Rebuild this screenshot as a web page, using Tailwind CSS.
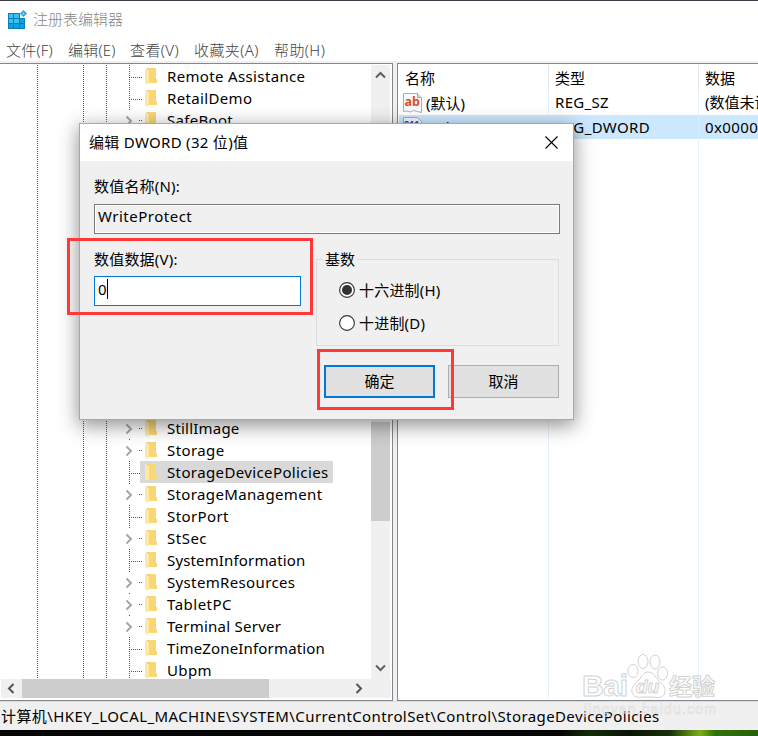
<!DOCTYPE html>
<html lang="zh-CN">
<head>
<meta charset="utf-8">
<title>注册表编辑器</title>
<script src="https://cdn.jsdelivr.net/npm/@tailwindcss/browser@4"></script>
</head>
<body class="relative flex h-[736px] w-[758px] flex-col overflow-hidden bg-white font-['Noto_Sans','Noto_Sans_CJK_SC',sans-serif] text-[15px] leading-[22px] text-black">
<div class="h-px shrink-0 bg-[#3e3944]"></div>

<header class="flex h-[37px] shrink-0 items-center pl-2 text-[#888]">
  <svg class="mr-[5px] h-5 w-5" viewBox="0 0 20 20">
    <path fill="#0b7dba" d="M0 3h12v5h5v11H0z"/>
    <path fill="#35c3f3" d="M1 4h4v4H1zM6 4h5v4H6zM1 9h4v4H1zM6 9h5v4H6z"/>
    <path fill="#12a0dc" d="M12 9h4v4h-4zM1 14h4v4H1zM6 14h5v4H6zM12 14h4v4h-4z"/>
    <path fill="#2b9fd4" d="M15.500 0l3.500 3.500-3.500 3.500L12 3.500z"/><path fill="#7bd5f3" d="M15.500 2l1.500 1.500-1.500 1.500L14 3.500z"/>
  </svg>
  <span class="-mt-px font-light">注册表编辑器</span>
</header>

<nav class="flex h-[23px] shrink-0 items-center pl-[6px] font-light text-[#444]">
  <span class="w-[62px] tracking-[0.2px]">文件(F)</span><span class="w-[62px] tracking-[0.2px]">编辑(E)</span><span class="w-[64px] tracking-[0.4px]">查看(V)</span><span class="w-[80px] tracking-[0.4px]">收藏夹(A)</span><span class="tracking-[0.4px]">帮助(H)</span>
</nav>
<div class="h-[2px] shrink-0 bg-[#f0f0f0]"></div>

<main class="flex h-[638px] shrink-0 bg-[#f0f0f0]">
  <section class="flex w-[393px] shrink-0 flex-col border-y border-r border-[#828790] bg-white pt-px pr-px pb-[2px]">
    <div class="flex h-[614px]">
      <div class="relative w-[371px] shrink-0 overflow-hidden">
        <div class="absolute top-0 left-[37px] h-full w-px bg-[repeating-linear-gradient(180deg,#555_0_1px,transparent_1px_2px)]"></div>
        <div class="absolute top-0 left-[83px] h-full w-px bg-[repeating-linear-gradient(180deg,#555_0_1px,transparent_1px_2px)]"></div>
        <div class="absolute top-0 left-[106px] h-full w-px bg-[repeating-linear-gradient(180deg,#555_0_1px,transparent_1px_2px)]"></div>
        <div id="tree"></div>
      </div>
      <div class="flex w-[19px] flex-col items-center bg-[#f0f0f0]">
        <svg class="mt-[6px] h-2 w-[11px]" viewBox="0 0 11 8" fill="none" stroke="#606060" stroke-width="2"><path d="M1 6.500L5.500 2 10 6.500"/></svg>
        <div class="mt-[343px] h-[99px] w-full bg-[#cdcdcd]"></div>
        <svg class="mt-[143px] h-2 w-[11px]" viewBox="0 0 11 8" fill="none" stroke="#606060" stroke-width="2"><path d="M1 1.500L5.500 6 10 1.500"/></svg>
      </div>
    </div>
    <div class="ml-px flex h-[19px] items-center bg-[#f0f0f0]">
      <svg class="ml-[6px] h-[11px] w-2" viewBox="0 0 8 11" fill="none" stroke="#555" stroke-width="2"><path d="M6.500 1L2 5.500 6.500 10"/></svg>
      <div class="ml-[7px] h-full w-[247px] bg-[#cdcdcd]"></div>
      <svg class="ml-[86px] h-[11px] w-2" viewBox="0 0 8 11" fill="none" stroke="#555" stroke-width="2"><path d="M1.500 1L6 5.500 1.500 10"/></svg>
    </div>
  </section>

  <section class="ml-1 flex min-w-0 flex-1 flex-col overflow-hidden border-y border-l border-[#828790] bg-white pt-px pb-px pl-px">
    <div class="grid h-[26px] shrink-0 grid-cols-[150px_150px_1fr] items-stretch">
      <div class="border-r border-[#e5e5e5] pt-[2px] pl-[6px]">名称</div>
      <div class="border-r border-[#e5e5e5] pt-[2px] pl-[6px]">类型</div>
      <div class="pt-[2px] pl-[6px]">数据</div>
    </div>
    <div class="grid h-6 shrink-0 grid-cols-[150px_150px_60px] whitespace-nowrap">
      <div class="flex items-center border-r border-[#e5f3ff] pl-1">
        <svg class="mr-[3px] h-5 w-5" viewBox="0 0 20 20"><path d="M.5 .5h14l4 4v15l-4-1-4-1-3 1.500-4-1-3 .5z" fill="#f9fafb" stroke="#a8adb0"/><path d="M14.500 .5v4h4" fill="#ddd" stroke="#aaa"/><text x="1.500" y="13" font-size="12.500" font-weight="700" fill="#d94f2b" font-family="Noto Sans">ab</text></svg>
        <span>(默认)</span>
      </div>
      <div class="border-r border-[#e5f3ff] pl-[6px] tracking-[0.3px]">REG_SZ</div>
      <div class="pl-[6px]">(数值未设置)</div>
    </div>
    <div class="grid h-6 shrink-0 grid-cols-[150px_150px_60px] bg-[#cce8ff] whitespace-nowrap">
      <div class="flex items-center pl-1">
        <svg class="mr-[2px] h-5 w-5" viewBox="0 0 20 20"><path d="M.5 .5h14l4 4v15H.5z" fill="#f4f7fb" stroke="#a8adb0"/><text x="1" y="10" font-size="9" font-weight="700" fill="#2545c8" font-family="Noto Sans">011</text></svg>
        <span class="tracking-[0.4px]">WriteProtect</span>
      </div>
      <div class="border-r border-[#d8edff] pt-px pl-[6px] tracking-[0.35px]">REG_DWORD</div>
      <div class="pt-px pl-[6px] tracking-[0.4px]">0x00000000</div>
    </div>
    <div class="grid flex-1 grid-cols-[150px_150px_1fr]">
      <div class="border-r border-[#e5f3ff]"></div><div class="border-r border-[#e5f3ff]"></div><div></div>
    </div>
  </section>
</main>

<footer class="flex h-[29px] shrink-0 items-center border-t border-[#dcdcdc] bg-[#f0f0f0] pl-px whitespace-nowrap"><span class="tracking-[0.41px]">计算机\HKEY_LOCAL_MACHINE\SYSTEM\CurrentControlSet\Control\StorageDevicePolicies</span></footer>
<div class="flex-1 bg-[linear-gradient(90deg,#050505_0_560px,#142b08_590px,#0a1405_630px,#18300b_670px,#7cae1a_700px,#32720c_715px,#285f0b_758px)]"></div>

<svg class="absolute top-[650px] left-[580px] h-[70px] w-[140px]" viewBox="0 0 140 70" fill="#fff" fill-opacity=".6" stroke="#d2d2d2">
  <text x="2" y="46" font-family="Liberation Sans" font-weight="700" font-size="30" textLength="46">Bai</text>
  <ellipse cx="53" cy="21" rx="5" ry="6.500"/><ellipse cx="63" cy="11.500" rx="5" ry="7"/><ellipse cx="75" cy="12" rx="5" ry="7"/><ellipse cx="82.500" cy="23.500" rx="5" ry="6.500"/>
  <path d="M68 22c5 0 7 4 10 8 4 4 8 7 7 12-1 6-7 6-12 5h-10c-5 1-10 0-11-5-1-5 3-8 7-12 3-4 4-8 9-8z"/>
  <text x="56" y="43" font-family="Liberation Sans" font-style="italic" font-weight="700" font-size="19" textLength="23">du</text>
  <text x="89" y="45" font-family="Noto Sans CJK SC" font-weight="700" font-size="23" textLength="46">经验</text>
  <text x="4" y="64" font-family="Liberation Sans" font-size="14" stroke-width=".6" stroke-opacity=".7" fill-opacity=".35" textLength="132">jingyan.baidu.com</text>
</svg>

<div class="absolute top-[123px] left-[79px] flex h-[297px] w-[495px] flex-col border border-[#78b4e8] bg-[#f0f0f0] shadow-[0_5px_18px_1px_rgba(0,0,0,0.42)]">
  <div class="flex h-[37px] shrink-0 items-center justify-between bg-white pr-[15px] pl-[9px]">
    <span class="-mt-[2px] tracking-[0.3px]">编辑 DWORD (32 位)值</span>
    <svg class="h-[13px] w-[13px]" viewBox="0 0 13 13" stroke="#000" stroke-width="1.100"><path d="M.5 .5l12 12M12.500 .5l-12 12"/></svg>
  </div>
  <div class="flex flex-col px-[14px] pt-[14px]">
    <span class="h-[22px] tracking-[0.2px]">数值名称(N):</span>
    <div class="mt-[7px] h-[30px] w-[466px] border border-[#7a7a7a] px-[3px] tracking-[0.5px] shadow-[inset_0_0_0_1px_#fff]">WriteProtect</div>
    <div class="flex">
      <div class="w-[222px] pt-[14px]">
        <div class="h-[22px] tracking-[0.2px]">数值数据(V):</div>
        <div class="mt-[6px] flex h-[30px] w-[207px] border border-[#0078d7] bg-white pt-px pl-[3px]"><span>0</span><span class="mt-px h-5 w-px bg-black"></span></div>
      </div>
      <div class="mt-[25px] h-[87px] w-[243px] border border-[#dcdcdc]">
        <div class="-mt-3 ml-[6px] h-[22px] w-[34px] bg-[#f0f0f0] pl-[2px]">基数</div>
        <div class="mt-[9px] ml-[22px] flex h-[22px] items-center gap-1"><svg class="h-4 w-4" viewBox="0 0 16 16"><circle cx="8" cy="8" r="7.400" fill="#fff" stroke="#333" stroke-width="1.100"/><circle cx="8" cy="8" r="5" fill="#333"/></svg><span class="tracking-[0.2px]">十六进制(H)</span></div>
        <div class="mt-[11px] ml-[22px] flex h-[22px] items-center gap-1"><svg class="h-4 w-4" viewBox="0 0 16 16"><circle cx="8" cy="8" r="7.400" fill="#fff" stroke="#333" stroke-width="1.100"/></svg><span class="tracking-[0.2px]">十进制(D)</span></div>
      </div>
    </div>
    <div class="mt-[19px] ml-[230px] flex gap-[13px]">
      <div class="flex h-[33px] w-[111px] items-center justify-center border-2 border-[#0078d7] bg-[#e1e1e1] pb-[2px]">确定</div>
      <div class="flex h-[33px] w-[111px] items-center justify-center border border-[#adadad] bg-[#e1e1e1] pb-[2px]">取消</div>
    </div>
  </div>
</div>

<div class="absolute top-[238px] left-[67px] h-[77px] w-[246px] border-3 border-[#ff3838]"></div>
<div class="absolute top-[349px] left-[317px] h-[61px] w-[137px] border-3 border-[#ff3838]"></div>

<script>
// [name, expandable, letter spacing in px, selected]
const before = [['Remote Assistance', 0, .35], ['RetailDemo', 0, .35], ['SafeBoot', 1, .3]];
const after = [['StillImage', 1, .2], ['Storage', 1, .4], ['StorageDevicePolicies', 0, .38, 1], ['StorageManagement', 1, .36], ['StorPort', 0, .4], ['StSec', 1, .5], ['SystemInformation', 0, .15], ['SystemResources', 1, .35], ['TabletPC', 1, .5], ['Terminal Server', 1, .25], ['TimeZoneInformation', 0, .16], ['Ubpm', 0, .4]];
const folder = '<svg class="mr-[7px] h-[17px] w-3 shrink-0" viewBox="0 0 12 17"><path d="M2 0h9v11h1v4H2z" fill="#f2cb63"/><path d="M4 0h7v11h1v4H4z" fill="#f8d775"/><path d="M0 0l4 2v12l-1 3-3-2z" fill="#ffe9a2"/></svg>';
const branch = open => open
  ? '<svg class="h-[22px] w-5 shrink-0" viewBox="0 0 20 22"><path d="M1.500 7.500l4.500 4.500L1.500 16.500" fill="none" stroke="#a6a6a6" stroke-width="2"/><path d="M14 11h1v1h-1zM16 11h1v1h-1zM4 0h1v1H4z" fill="#555"/></svg>'
  : '<svg class="h-[22px] w-5 shrink-0" viewBox="0 0 20 22" fill="none" stroke="#555" stroke-dasharray="1 1"><path d="M4.500 0v22M4 12.500h14"/></svg>';
const row = ([name, open, space, sel]) => `<div class="flex h-[22px] items-center pl-[125px]">${branch(open)}<div class="${sel ? '-ml-[5px] flex h-[22px] items-center bg-[#d9d9d9] pr-1 pl-[5px]' : 'flex h-[22px] items-center'}">${folder}<span class="pl-[3px] whitespace-nowrap" style="letter-spacing:${space}px">${name}</span></div></div>`;
document.getElementById('tree').innerHTML = before.map(row).join('') + '<div class="h-[286px]"></div>' + after.map(row).join('');
</script>
</body>
</html>
